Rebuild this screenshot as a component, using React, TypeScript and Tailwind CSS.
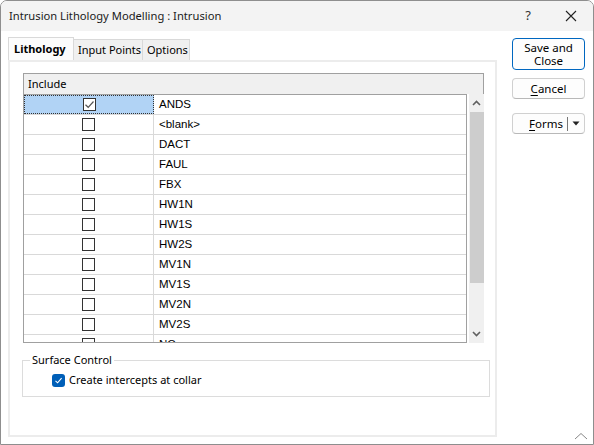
/** Intrusion Lithology Modelling dialog — lithology include grid with surface control. */

import { useState } from "react";

const lithologies = [
  "ANDS",
  "<blank>",
  "DACT",
  "FAUL",
  "FBX",
  "HW1N",
  "HW1S",
  "HW2S",
  "MV1N",
  "MV1S",
  "MV2N",
  "MV2S",
  "NC",
];

function Check({ checked }: { checked: boolean }) {
  return (
    <div className="flex h-[13px] w-[13px] items-center justify-center border border-[#333333] bg-white">
      {checked && (
        <svg width="11" height="11" viewBox="0 0 11 11">
          <path d="M1.5 5.8 L4.2 8.3 L9.5 2.5" fill="none" stroke="#555" strokeWidth="1.2" />
        </svg>
      )}
    </div>
  );
}

function Chevron({ up }: { up: boolean }) {
  return (
    <svg width="9" height="6" viewBox="0 0 9 6">
      <path d={up ? "M1 5 L4.5 1.5 L8 5" : "M1 1 L4.5 4.5 L8 1"} fill="none" stroke="#606060" strokeWidth="1.6" />
    </svg>
  );
}

export default function App() {
  const [included, setIncluded] = useState<Record<string, boolean>>({ ANDS: true });
  const [collar, setCollar] = useState(true);

  return (
    <div
      className="relative flex h-[445px] w-[594px] flex-col overflow-hidden rounded-t-[7px] border border-[#8e8e8e] bg-white text-[11px] text-black"
      style={{ fontFamily: '"Noto Sans", sans-serif' }}
    >
      {/* Title bar */}
      <div className="flex h-[30px] shrink-0 items-center bg-[#f3f3f3] pl-[8px]">
        <span className="flex-1 text-[11.2px] text-[#1a1a1a]">Intrusion Lithology Modelling : Intrusion</span>
        <span className="mr-[34px] text-[13px] text-[#333]">?</span>
        <svg className="mr-[16px]" width="12" height="12" viewBox="0 0 12 12">
          <path d="M1 1 L11 11 M11 1 L1 11" stroke="#222" strokeWidth="1.1" />
        </svg>
      </div>

      <div className="flex flex-1 bg-white">
        {/* Left: tabs + panel */}
        <div className="flex w-[496px] flex-col pl-[7px] pt-[7px]">
          <div className="flex h-[22px] items-end whitespace-nowrap">
            <div className="flex h-[23px] w-[66px] items-center border border-b-0 border-[#d9d9d9] bg-[#fcfcfc] pl-[5px] font-bold">
              Lithology
            </div>
            <div className="flex h-[21px] w-[69px] items-center border-t border-r border-[#d9d9d9] bg-[#f0f0f0] pl-[4px]">
              Input Points
            </div>
            <div className="flex h-[21px] w-[47px] items-center border-t border-r border-[#d9d9d9] bg-[#f0f0f0] pl-[4px]">
              Options
            </div>
          </div>

          <div className="flex h-[377px] flex-col border-2 border-[#ececec] bg-white pl-[13px] pt-[11px]">
            {/* Grid */}
            <div className="flex w-[461px] flex-col">
              <div className="flex h-[21px] items-center border border-b-0 border-[#a0a0a0] bg-[#f0f0f0] pl-[4px]">
                Include
              </div>
              <div className="flex h-[249px]">
                <div
                  className="flex w-[445px] flex-col overflow-hidden border border-[#a0a0a0] text-[11.5px]"
                  style={{ fontFamily: '"Liberation Sans", sans-serif' }}
                >
                  {lithologies.map((name, i) => (
                    <div key={name} className="flex h-[20px] shrink-0 border-b border-[#d9d9d9]">
                      <div
                        onClick={() => setIncluded({ ...included, [name]: !included[name] })}
                        className={
                          i === 0
                            ? "flex w-[130px] items-center justify-center border border-dotted border-[#333] bg-[#b1d3f5]"
                            : "flex w-[130px] items-center justify-center border-r border-[#d9d9d9]"
                        }
                      >
                        <Check checked={!!included[name]} />
                      </div>
                      <div className="flex flex-1 items-center pl-[5px]">{name}</div>
                    </div>
                  ))}
                </div>
                <div className="ml-[2px] flex w-[15px] flex-col items-center bg-[#f0f0f0]">
                  <div className="flex h-[18px] items-center">
                    <Chevron up />
                  </div>
                  <div className="h-[171px] w-[14px] bg-[#cdcdcd]" />
                  <div className="flex-1" />
                  <div className="flex h-[18px] items-center">
                    <Chevron up={false} />
                  </div>
                </div>
              </div>
            </div>

            {/* Surface Control */}
            <div className="relative mt-[17px] ml-[-1px] h-[37px] w-[468px] border border-[#dcdcdc]">
              <span className="absolute left-[7px] top-[-10px] bg-white px-[2px] leading-[18px]">Surface Control</span>
              <label className="flex items-center pt-[11px] pl-[29px]" onClick={() => setCollar(!collar)}>
                <span className="flex h-[13px] w-[13px] items-center justify-center rounded-[3px] bg-[#005fb8]">
                  {collar && (
                    <svg width="9" height="9" viewBox="0 0 9 9">
                      <path d="M1.5 4.8 L3.6 6.8 L7.6 2.2" fill="none" stroke="white" strokeWidth="1.1" />
                    </svg>
                  )}
                </span>
                <span className="ml-[4px]">Create intercepts at collar</span>
              </label>
            </div>
          </div>
        </div>

        {/* Right: buttons */}
        <div className="flex flex-col pl-[15px] pt-[7px] text-[11.5px]">
          <button className="flex h-[32px] w-[73px] items-center justify-center rounded-[4px] border border-[#0067c0] bg-[#fdfdfd] leading-[13px]">
            Save and
            <br />
            Close
          </button>
          <button className="mt-[8px] h-[21px] w-[73px] rounded-[4px] border border-[#d0d0d0] border-b-[#b8b8b8] bg-[#fdfdfd]">
            <span className="underline underline-offset-2">C</span>ancel
          </button>
          <div className="mt-[14px] flex h-[21px] w-[73px] items-center rounded-[4px] border border-[#d0d0d0] border-b-[#b8b8b8] bg-[#fdfdfd]">
            <span className="flex-1 pr-[4px] text-right">
              <span className="underline underline-offset-2">F</span>orms
            </span>
            <span className="h-[14px] w-px bg-[#777]" />
            <span className="flex w-[16px] justify-center">
              <svg width="8" height="5" viewBox="0 0 8 5">
                <path d="M0.5 0.5 L7.5 0.5 L4 4.5 Z" fill="#222" />
              </svg>
            </span>
          </div>
        </div>
      </div>

      <svg className="absolute bottom-[4px] right-[5px]" width="14" height="8" viewBox="0 0 14 8">
        <path d="M1 7 L7 1.5 L13 7" fill="none" stroke="#888" strokeWidth="1" />
      </svg>
    </div>
  );
}
